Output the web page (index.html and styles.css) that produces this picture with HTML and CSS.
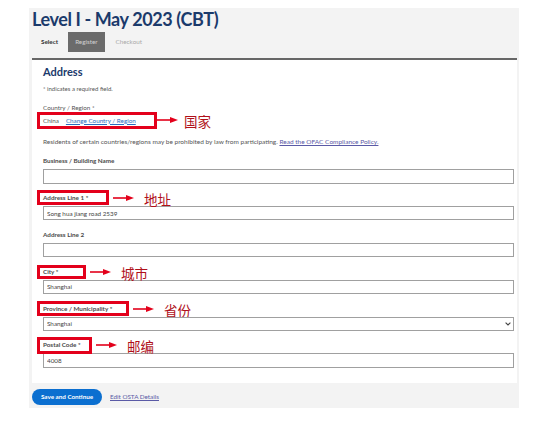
FILE: index.html
```html
<!DOCTYPE html>
<html lang="en">
<head>
<meta charset="utf-8">
<title>Level I - May 2023 (CBT)</title>
<link rel="stylesheet" href="styles.css">
</head>
<body>
<div class="page">
  <h1 class="title">Level I - May 2023 (CBT)</h1>
  <nav class="steps">
    <span class="step step-done">Select</span>
    <span class="step step-active">Register</span>
    <span class="step step-next">Checkout</span>
  </nav>

  <main class="card">
    <h2 class="heading">Address</h2>
    <p class="required">* indicates a required field.</p>

    <div class="label-row"><span class="label label-plain">Country / Region *</span></div>
    <div class="label-row country-row">
      <span class="mark mark-country"><span class="country-value">China</span><a class="link" href="#">Change Country / Region</a></span>
      <svg class="arrow arrow-tight" viewBox="0 0 21 8" width="21" height="8"><path d="M0 4H14" stroke="#e3001b" stroke-width="1.6"/><path d="M13 1L21 4L13 7Z" fill="#e3001b"/></svg>
      <span class="note">国家</span>
    </div>

    <p class="notice">Residents of certain countries/regions may be prohibited by law from participating. <a class="link link-visited" href="#">Read the OFAC Compliance Policy.</a></p>

    <div class="field">
      <div class="label-row"><label class="label" for="biz">Business / Building Name</label></div>
      <input class="input" id="biz" type="text">
    </div>

    <div class="field">
      <div class="label-row">
        <span class="mark mark-addr1"><label class="label" for="addr1">Address Line 1 *</label></span>
        <svg class="arrow" viewBox="0 0 21 8" width="21" height="8"><path d="M0 4H14" stroke="#e3001b" stroke-width="1.6"/><path d="M13 1L21 4L13 7Z" fill="#e3001b"/></svg>
        <span class="note">地址</span>
      </div>
      <input class="input" id="addr1" type="text" value="Song hua jiang road 2539">
    </div>

    <div class="field">
      <div class="label-row"><label class="label" for="addr2">Address Line 2</label></div>
      <input class="input" id="addr2" type="text">
    </div>

    <div class="field">
      <div class="label-row">
        <span class="mark mark-city"><label class="label" for="city">City *</label></span>
        <svg class="arrow" viewBox="0 0 21 8" width="21" height="8"><path d="M0 4H14" stroke="#e3001b" stroke-width="1.6"/><path d="M13 1L21 4L13 7Z" fill="#e3001b"/></svg>
        <span class="note">城市</span>
      </div>
      <input class="input" id="city" type="text" value="Shanghai">
    </div>

    <div class="field">
      <div class="label-row">
        <span class="mark mark-province"><label class="label" for="prov">Province / Municipality *</label></span>
        <svg class="arrow" viewBox="0 0 21 8" width="21" height="8"><path d="M0 4H14" stroke="#e3001b" stroke-width="1.6"/><path d="M13 1L21 4L13 7Z" fill="#e3001b"/></svg>
        <span class="note">省份</span>
      </div>
      <div class="select-wrap">
        <select class="input select" id="prov"><option>Shanghai</option></select>
        <svg class="chevron" viewBox="0 0 6 4" width="6" height="4"><path d="M0.6 0.6L3 3L5.4 0.6" fill="none" stroke="#444" stroke-width="1.1"/></svg>
      </div>
    </div>

    <div class="field field-last">
      <div class="label-row">
        <span class="mark mark-postal"><label class="label" for="postal">Postal Code *</label></span>
        <svg class="arrow" viewBox="0 0 21 8" width="21" height="8"><path d="M0 4H14" stroke="#e3001b" stroke-width="1.6"/><path d="M13 1L21 4L13 7Z" fill="#e3001b"/></svg>
        <span class="note">邮编</span>
      </div>
      <input class="input" id="postal" type="text" value="4008">
    </div>
  </main>

  <footer class="actions">
    <button class="btn" type="button">Save and Continue</button>
    <a class="link link-visited" href="#">Edit OSTA Details</a>
  </footer>
</div>
</body>
</html>
```

FILE: styles.css
```css
* { box-sizing: border-box; }

body {
  margin: 0;
  background: #ffffff;
  font-family: Lato, "Noto Sans", "Liberation Sans", sans-serif;
  color: #555;
}

.page {
  width: 490px;
  margin: 8px 0 0 29px;
  padding: 0 2px 0 3px;
  background: #f3f3f3;
}

.title {
  margin: 0;
  font-size: 18px;
  line-height: 22px;
  font-weight: 700;
  letter-spacing: -0.4px;
  color: #1b3a6b;
}

.steps {
  display: flex;
  align-items: center;
  height: 30px;
  padding: 3px 0 7px 9px;
  border-bottom: 2px solid #666;
}

.step {
  font-size: 6.3px;
  line-height: 20px;
}

.step-done {
  color: #333;
  font-weight: 700;
  margin-right: 10px;
}

.step-active {
  background: #6b6b6b;
  color: #d2d2d2;
  padding: 0 7px;
}

.step-next {
  color: #aaa;
  margin-left: 11px;
}

.card {
  display: block;
  background: #fff;
  padding: 5px 3px 15px 11px;
}

.heading {
  margin: 0;
  font-size: 11px;
  line-height: 14px;
  font-weight: 700;
  color: #1b3a6b;
}

.required {
  margin: 6px 0 11px;
  font-size: 6px;
  line-height: 8px;
  color: #555;
}

.label-row {
  display: flex;
  align-items: center;
  height: 8px;
  margin-bottom: 4px;
}

.label {
  font-size: 6.3px;
  line-height: 8px;
  font-weight: 700;
  color: #4a4a4a;
  white-space: nowrap;
}

.label-plain {
  font-weight: 400;
  color: #555;
}

.country-row {
  margin-bottom: 14px;
}

.country-value {
  font-size: 6.3px;
  color: #555;
  margin-right: 7px;
}

.link {
  font-size: 6.3px;
  color: #2a6ebf;
  text-decoration: underline;
  white-space: nowrap;
}

.notice .link {
  font-size: 6.5px;
}

.link-visited {
  color: #5a5aa6;
}

.notice {
  margin: 0 0 11px;
  font-size: 6.5px;
  line-height: 8px;
  color: #555;
  white-space: nowrap;
}

.mark {
  display: flex;
  align-items: center;
  flex: none;
  height: 15px;
  margin-left: -6px;
  padding-left: 3px;
  border: 3px solid #e3001b;
}

.mark-country { width: 120px; height: 17px; }
.mark-addr1 { width: 72px; }
.mark-city { width: 49px; height: 14px; }
.mark-province { width: 92px; }
.mark-postal { width: 55px; height: 17px; }

.arrow {
  flex: none;
  margin: 0 10px 0 4px;
}

.arrow-tight {
  margin: 0 6px 0 0;
}

.note {
  font-family: "Noto Sans CJK SC", "Noto Sans", sans-serif;
  font-size: 13.5px;
  line-height: 16px;
  color: #b0101a;
  margin-top: 2px;
  white-space: nowrap;
}

.field {
  margin-bottom: 10.4px;
}

.field-last {
  margin-bottom: 0;
}

.input {
  display: block;
  width: 100%;
  height: 14.5px;
  margin: 0;
  padding: 0 3px;
  border: 1px solid #a0a0a0;
  border-radius: 0;
  background: #fff;
  font-family: Lato, "Noto Sans", sans-serif;
  font-size: 6.3px;
  color: #444;
  outline: none;
}

.select-wrap {
  position: relative;
}

.select {
  appearance: none;
  -webkit-appearance: none;
}

.chevron {
  position: absolute;
  right: 3px;
  top: 5.5px;
  pointer-events: none;
}

.actions {
  display: flex;
  align-items: center;
  gap: 8px;
  height: 25px;
  padding: 3px 0 0;
}

.btn {
  width: 70px;
  height: 16px;
  padding: 0;
  border: none;
  border-radius: 8px;
  background: #0b6fd0;
  color: #fff;
  font-family: Lato, "Noto Sans", sans-serif;
  font-size: 6.3px;
  font-weight: 700;
}
```
